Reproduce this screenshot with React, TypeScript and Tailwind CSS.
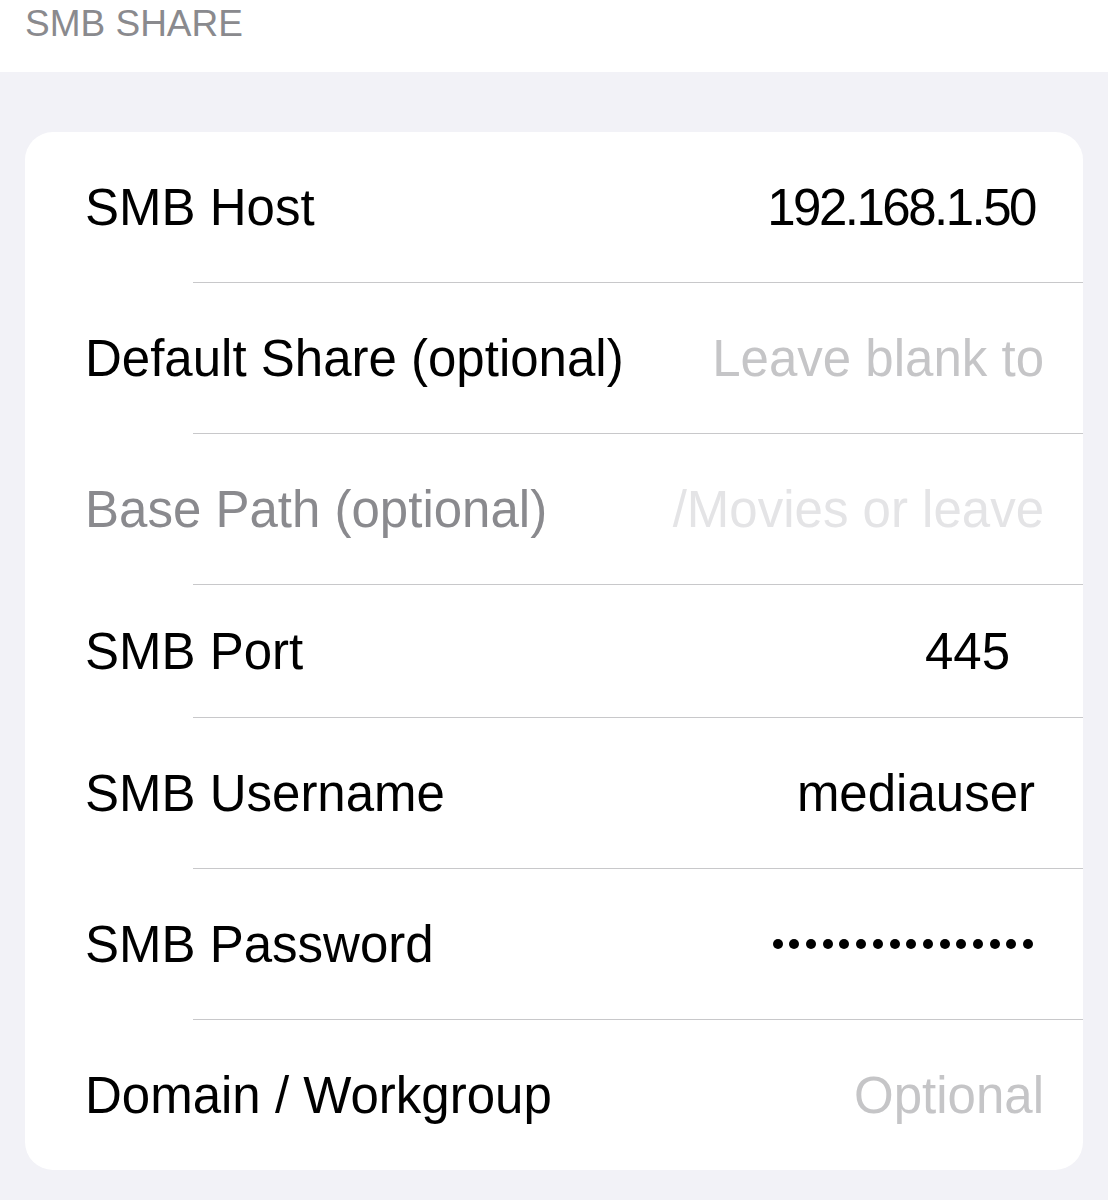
const font = { fontFamily: '"Liberation Sans", Arial, sans-serif' };

type Row = {
    label: string;
    value?: string;
    placeholder?: string;
    disabled?: boolean;
    password?: boolean;
    short?: boolean;
    tight?: boolean;
    pr: string;
};

const rows: Row[] = [
    { label: "SMB Host", value: "192.168.1.50", tight: true, pr: "pr-[48px]" },
    { label: "Default Share (optional)", placeholder: "Leave blank to", pr: "pr-[39px]" },
    { label: "Base Path (optional)", placeholder: "/Movies or leave", disabled: true, pr: "pr-[39px]" },
    { label: "SMB Port", value: "445", short: true, pr: "pr-[73px]" },
    { label: "SMB Username", value: "mediauser", pr: "pr-[48px]" },
    { label: "SMB Password", password: true, pr: "pr-[50px]" },
    { label: "Domain / Workgroup", placeholder: "Optional", pr: "pr-[39px]" },
];

const Dots = () => (
    <div className="flex gap-[6.7px]">
        {Array.from({ length: 16 }).map((_, i) => (
            <span key={i} className="block w-[10px] h-[10px] rounded-full bg-black" />
        ))}
    </div>
);

const App = () => {
    return (
        <div className="w-[1108px] h-[1200px] bg-[#f2f2f7] overflow-hidden" style={font}>
            <div className="h-[72px] bg-white pl-[25px] pt-[5px]">
                <span className="text-[37px] leading-none text-[#8a8a8e]">SMB SHARE</span>
            </div>
            <div className="px-[25px] pt-[60px]">
                <div className="bg-white rounded-[28px] overflow-hidden">
                    {rows.map((row, i) => (
                        <div key={row.label}>
                            {i > 0 && <div className="ml-[168px] h-px bg-[#c8c8ca]" />}
                            <div
                                className={`flex items-center justify-between pl-[60px] ${row.pr} ${
                                    row.short ? "h-[132px]" : "h-[150px]"
                                }`}
                            >
                                <span
                                    className={`text-[51px] leading-none whitespace-nowrap ${
                                        row.disabled ? "text-[#8a8a8e]" : "text-black"
                                    }`}
                                >
                                    {row.label}
                                </span>
                                {row.password ? (
                                    <Dots />
                                ) : (
                                    <span
                                        className={`text-[51px] leading-none whitespace-nowrap ${
                                            row.tight ? "tracking-[-2.5px]" : ""
                                        } ${
                                            row.value
                                                ? "text-black"
                                                : row.disabled
                                                ? "text-[#e4e4e6]"
                                                : "text-[#c5c5c7]"
                                        }`}
                                    >
                                        {row.value ?? row.placeholder}
                                    </span>
                                )}
                            </div>
                        </div>
                    ))}
                </div>
            </div>
        </div>
    );
};

export default App;
